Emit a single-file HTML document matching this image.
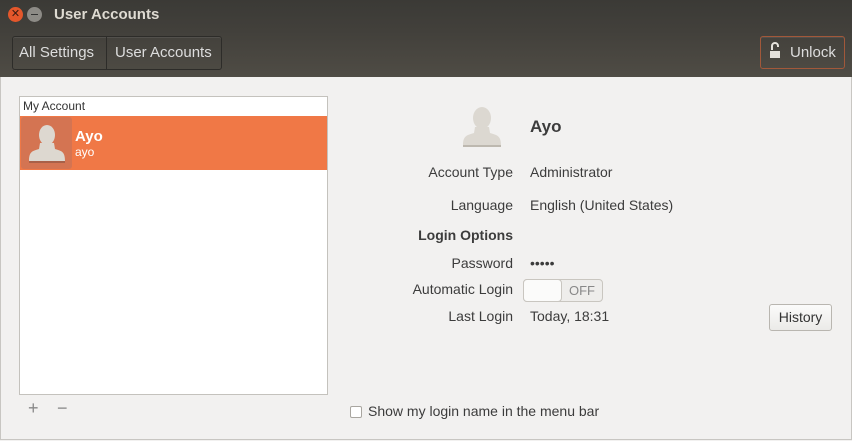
<!DOCTYPE html><html><head><style>
body{margin:0;width:852px;height:441px;overflow:hidden;font-family:"Liberation Sans",sans-serif;background:#f2f1f0;position:relative}
.a{position:absolute}
.tb{left:0;top:0;width:852px;height:31px;background:linear-gradient(#3b3a36,#42403b)}
.tl{left:0;top:31px;width:852px;height:46px;background:linear-gradient(#42403b,#4f4c45)}
.btn{border:1px solid #2d2c29;border-radius:3px;color:#ddd;font-size:15px;line-height:32px;box-shadow:inset 0 1px rgba(255,255,255,.08)}
.lbl{right:339px;font-size:14px;color:#3c3c3c;text-align:right}
.val{left:530px;font-size:14px;color:#3c3c3c}
</style></head><body>
<div class="a tb"></div>
<div class="a" style="left:8px;top:7px;width:15px;height:15px;border-radius:50%;background:#e4572b;color:#3a1a10;font-size:11px;text-align:center;line-height:15px">✕</div>
<div class="a" style="left:27px;top:7px;width:15px;height:15px;border-radius:50%;background:#8d8b86"><div class="a" style="left:4px;top:7px;width:7px;height:1px;background:#333"></div></div>
<div class="a" style="left:54px;top:6px;color:#dfdbd2;font-size:15px;font-weight:bold">User Accounts</div>
<div class="a tl"></div>
<div class="a btn" style="left:12px;top:36px;width:208px;height:32px"></div>
<div class="a" style="left:106px;top:37px;width:1px;height:32px;background:#2d2c29"></div>
<div class="a" style="left:19px;top:37px;color:#ddd;font-size:15px;line-height:32px">All Settings</div>
<div class="a" style="left:115px;top:37px;color:#ddd;font-size:15px;line-height:32px">User Accounts</div>
<div class="a btn" style="left:760px;top:36px;width:83px;height:31px;border-color:#a2583a"></div>
<svg class="a" style="left:768px;top:42px" width="14" height="18"><path d="M4 8V4a3 3 0 0 1 6 0v1" stroke="#e5e2dc" stroke-width="2" fill="none"/><rect x="2" y="9" width="10" height="7" fill="#e5e2dc"/></svg>
<div class="a" style="left:790px;top:37px;color:#ddd;font-size:15px;line-height:32px">Unlock</div>
<div class="a" style="left:0;top:77px;width:850px;height:362px;border:1px solid #c8c6c2;border-top:none"></div>
<div class="a" style="left:19px;top:96px;width:307px;height:297px;background:#fff;border:1px solid #c4c2bd"></div>
<div class="a" style="left:23px;top:99px;font-size:12px;color:#333">My Account</div>
<div class="a" style="left:20px;top:116px;width:307px;height:54px;background:#f07846"></div>
<div class="a" style="left:21px;top:117px;width:51px;height:52px;background:#d47452;border-radius:3px"></div>
<svg class="a" style="left:27px;top:123px" width="40" height="42"><ellipse cx="20" cy="12" rx="8" ry="10" fill="#ddd8d0"/><path d="M13 20h14l1 6c7 2 10 3 10 12H2c0-9 3-10 10-12z" fill="#ddd8d0"/><rect x="2" y="38" width="36" height="2" fill="#a96048"/></svg>
<div class="a" style="left:75px;top:128px;font-size:15px;font-weight:bold;color:#fff">Ayo</div>
<div class="a" style="left:75px;top:145px;font-size:12px;color:#fff">ayo</div>
<div class="a" style="left:28px;top:398px;font-size:18px;color:#888">+</div>
<div class="a" style="left:57px;top:398px;font-size:18px;color:#888">−</div>
<svg class="a" style="left:461px;top:106px" width="42" height="42"><ellipse cx="21" cy="12" rx="9" ry="11" fill="#dcd8d1"/><path d="M14 21h14l1 6c7 2 11 3 11 12H2c0-9 4-10 11-12z" fill="#dcd8d1"/><rect x="2" y="39" width="38" height="2" fill="#bdb8af"/></svg>
<div class="a" style="left:530px;top:117px;font-size:17px;font-weight:bold;color:#3c3c3c">Ayo</div>
<div class="a lbl" style="top:164px">Account Type</div><div class="a val" style="top:164px">Administrator</div>
<div class="a lbl" style="top:197px">Language</div><div class="a val" style="top:197px">English (United States)</div>
<div class="a lbl" style="top:227px;font-weight:bold">Login Options</div>
<div class="a lbl" style="top:255px">Password</div><div class="a val" style="top:255px">•••••</div>
<div class="a lbl" style="top:281px">Automatic Login</div>
<div class="a" style="left:523px;top:279px;width:78px;height:21px;border:1px solid #c9c6c0;border-radius:4px;background:#eeedeb"></div>
<div class="a" style="left:523px;top:279px;width:37px;height:21px;border:1px solid #c9c6c0;border-radius:4px;background:#fbfbfa"></div>
<div class="a" style="left:569px;top:283px;font-size:13px;color:#888">OFF</div>
<div class="a lbl" style="top:308px">Last Login</div><div class="a val" style="top:308px">Today, 18:31</div>
<div class="a" style="left:769px;top:304px;width:61px;height:25px;border:1px solid #b9b6b0;border-radius:3px;background:linear-gradient(#fbfbfa,#ebeae8);font-size:14px;color:#333;text-align:center;line-height:25px">History</div>
<div class="a" style="left:350px;top:406px;width:10px;height:10px;border:1px solid #a9a6a0;border-radius:2px;background:#fff"></div>
<div class="a" style="left:368px;top:403px;font-size:14px;color:#3c3c3c">Show my login name in the menu bar</div>
</body></html>
